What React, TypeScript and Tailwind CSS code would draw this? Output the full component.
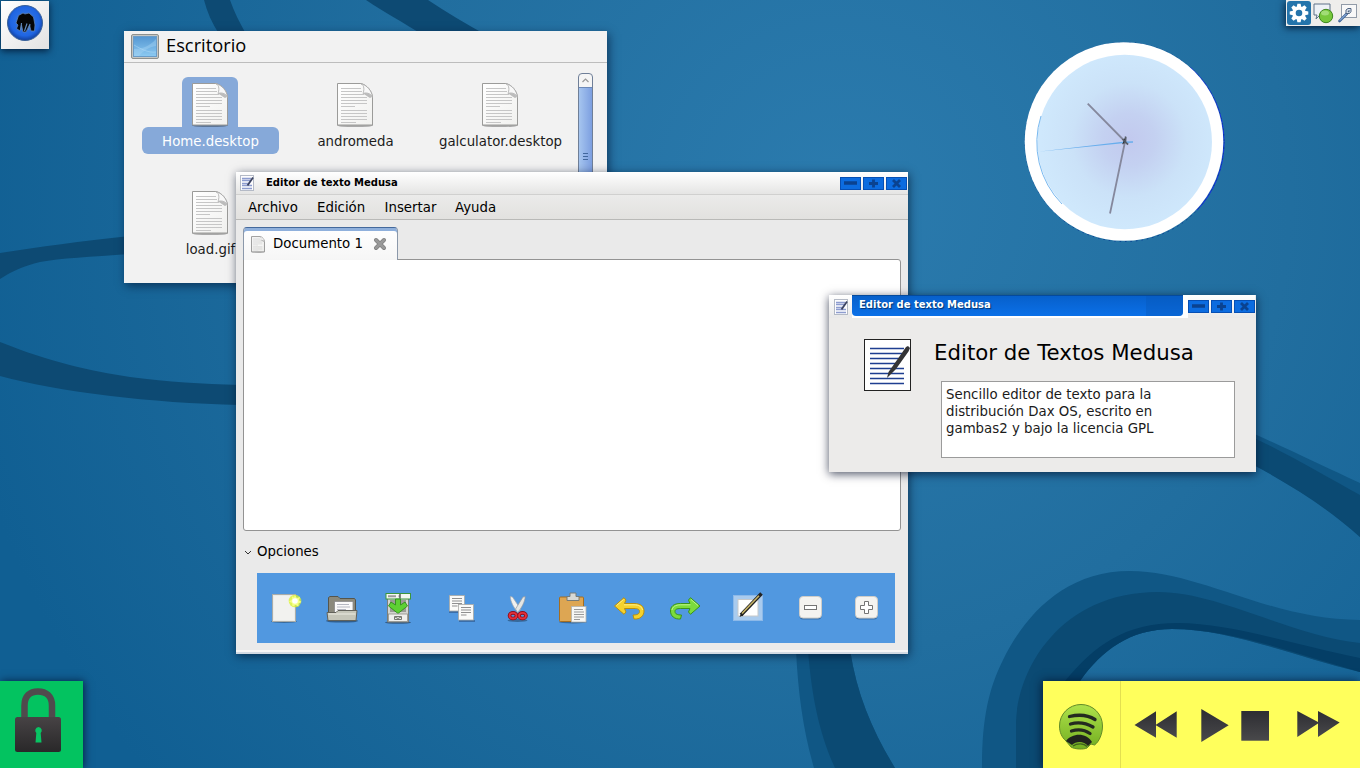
import React from "react";

const UI = "font-['DejaVu_Sans',sans-serif]";

function Wallpaper() {
  return (
    <svg className="absolute inset-0" width="1360" height="768" viewBox="0 0 1360 768">
      <defs>
        <radialGradient id="sky" gradientUnits="userSpaceOnUse" cx="840" cy="200" r="900">
          <stop offset="0" stopColor="#2b7bae" />
          <stop offset="0.5" stopColor="#216e9f" />
          <stop offset="1" stopColor="#105f93" />
        </radialGradient>
      </defs>
      <rect width="1360" height="768" fill="url(#sky)" />
      <path d="M204 0C207 12 212 23 219 34L246 34C240 23 234 12 230 0Z" fill="#0d4a73" />
      <path d="M366 0C384 12 402 22 425 36L488 36C466 24 446 12 428 0Z" fill="#0d4a73" />
      <path d="M0 253C40 247 80 241 130 236L130 254C90 257 60 258 40 262C24 266 12 271 0 279Z" fill="#0d4a73" />
      <path d="M0 342C50 362 90 371 130 377C170 382 200 384 240 385L240 405C150 403 60 392 0 376Z" fill="#0d4a73" />
      <path d="M1250 432C1290 450 1325 467 1360 483L1360 537C1330 510 1295 487 1250 463Z" fill="#105785" />
      <path d="M1250 436C1290 455 1325 476 1360 495L1360 537C1330 510 1295 487 1250 463Z" fill="#0b4a73" />
      <path d="M796 650C798 692 803 730 814 768L895 768C872 730 857 695 850 650Z" fill="#105785" />
      <path d="M808 650C812 700 820 735 835 768L895 768C872 730 857 695 850 650Z" fill="#0b4a73" />
      <path d="M982 768C982 720 988 690 1003 660C1025 615 1065 571 1130 571C1200 571 1270 620 1360 620L1360 672C1290 655 1230 629 1172 629C1130 629 1102 650 1080 681L1050 768Z" fill="#105785" />
      <path d="M1016 768L1016 725C1016 670 1060 592 1158 592C1220 592 1290 636 1360 643L1360 672C1290 655 1230 629 1172 629C1130 629 1102 650 1080 681L1050 768Z" fill="#0b4a73" />
      <path d="M1065 681C1095 645 1125 623 1178 623C1230 623 1300 646 1360 658L1360 672C1290 652 1230 629 1172 629C1130 629 1102 650 1080 681Z" fill="#043e66" />
    </svg>
  );
}

function PageIcon({ small = false }: { small?: boolean }) {
  return (
    <svg width={small ? 14 : 38} height={small ? 17 : 46} viewBox="0 0 38 46">
      <defs>
        <linearGradient id="paper" x1="0" y1="0" x2="1" y2="1">
          <stop offset="0" stopColor="#ffffff" />
          <stop offset="1" stopColor="#f1f1ef" />
        </linearGradient>
      </defs>
      <ellipse cx="19" cy="43.5" rx="18" ry="1.6" fill="#000" opacity="0.3" />
      <path d="M1.5 1.5H25C31 3 36 9 36.500 15V43H1.500Z" fill="url(#paper)" stroke={small ? "#777" : "#9b9b99"} strokeWidth={small ? 2 : 1} />
      <path d="M5 6.500H25M5 9.500H26M5 12.500H28M5 15.500H31M5 18.500H31M5 21.500H31M5 24.500H19M5 28.500H31M5 31.500H31M5 34.500H31M5 37.500H31M5 40.500H20" stroke="#c6c6c6" strokeWidth="1.100" />
      <path d="M24.500 1.500C29 3 28 9 27 11.500C31 10 35.500 12 36.500 15.500C36 9 31 3 24.500 1.500Z" fill="#f8f8f8" stroke="#aaa" strokeWidth=".8" />
      <path d="M27 11.500C31 10 35 12 36 15L34 16C31 14 29 13 27 11.500Z" fill="#bcbcbc" />
    </svg>
  );
}

function EditorIcon({ large = false }: { large?: boolean }) {
  if (large) {
    return (
      <svg width="47" height="52" viewBox="0 0 47 52">
        <rect x=".5" y=".5" width="46" height="51" fill="#fff" stroke="#222" />
        <path d="M6 9.500H40M6 14.500H38M6 19.500H37M6 24.500H34M6 29.500H40M6 34.500H40M6 39.500H40M6 44.500H40" stroke="#1f3f91" strokeWidth="1.700" />
        <path d="M42 8L44 7L46 9L44.500 12.500L32 30L25 37L23 39L24.500 33L33 21Z" fill="#333335" />
      </svg>
    );
  }
  return (
    <svg width="14" height="16" viewBox="0 0 14 16">
      <rect x=".5" y=".5" width="13" height="15" fill="#fcfcfe" stroke="#b4bac6" />
      <path d="M2 3.500H11M2 5.500H10M2 8.500H9M2 10.500H12M2 13.500H12" stroke="#8d9ccf" strokeWidth="1.500" />
      <path d="M13 2.500L7.500 10.500" stroke="#3a4261" strokeWidth="1.800" />
    </svg>
  );
}

function WindowButtons() {
  const marks = ["M4 6H17", "M10.500 2.500V10.500M6 6.500H15", "M7 3L14 10M14 3L7 10"];
  return (
    <div className="flex gap-[2px]">
      {marks.map((d, i) => (
        <svg key={i} width="21" height="13" viewBox="0 0 21 13">
          <rect x=".5" y=".5" width="20" height="12" fill="#0c6ce0" stroke="#064fb4" />
          <path d={d} stroke="#0a4290" strokeWidth={i === 0 ? 3.500 : 2.800} fill="none" />
        </svg>
      ))}
    </div>
  );
}

function FileItem({ name, selected = false }: { name: string; selected?: boolean }) {
  return (
    <div className="flex h-[108px] w-[145px] flex-col items-center">
      <div className={`mr-[2px] flex h-[50px] w-14 items-start justify-center rounded-t-md pt-[5px] ${selected ? "bg-[#86a9d9]" : ""}`}>
        <PageIcon />
      </div>
      <div className={`flex h-[27px] w-[137px] items-center justify-center rounded-md text-[13.33px] ${selected ? "bg-[#86a9d9] text-white" : "text-[#1c1c1c]"}`}>
        <span className="whitespace-nowrap pt-[3px]">{name}</span>
      </div>
    </div>
  );
}

function FilesWindow() {
  return (
    <section className={`absolute left-[124px] top-[31px] flex h-[252px] w-[483px] flex-col bg-[#f2f2f2] shadow-[2px_3px_9px_rgba(0,20,50,0.6)] ${UI}`}>
      <header className="flex h-8 items-center border-b border-[#bdbdbd] pl-[7px] font-['Open_Sans',sans-serif]">
        <svg width="28" height="25" viewBox="0 0 28 25">
          <defs>
            <linearGradient id="desk" x1="0" y1="0" x2="0" y2="1">
              <stop offset="0" stopColor="#5597d2" />
              <stop offset="1" stopColor="#8ccaf2" />
            </linearGradient>
          </defs>
          <rect x=".5" y=".5" width="27" height="24" rx="1.500" fill="#c5c7c4" stroke="#8d908e" />
          <rect x="2.500" y="2.500" width="23" height="20" fill="url(#desk)" stroke="#6a9cc8" />
          <path d="M3 15C11 15 19 12 25 5V12C18 13 12 17 8 22H3Z" fill="#a9d8f6" opacity=".4" />
          <path d="M3 11C10 15 17 19 25 18" fill="none" stroke="#b4dcf6" opacity=".5" />
        </svg>
        <h1 className="pb-[4px] pl-[7px] text-[18.3px] text-black">Escritorio</h1>
      </header>
      <div className="flex min-h-0 flex-1 justify-between pr-[14px]">
        <div className="grid h-[206px] grid-cols-[145px_145px_145px] content-start overflow-hidden pl-[14px] pt-[14px]">
          <FileItem name="Home.desktop" selected />
          <FileItem name="andromeda" />
          <FileItem name="galculator.desktop" />
          <FileItem name="load.gif" />
        </div>
        <div className="mt-[10px] flex h-[170px] w-[15px] flex-col rounded-t border border-[#6f7f98] bg-[#f5f5f5]">
          <div className="flex h-[14px] items-center justify-center border-b border-[#6c89b8]">
            <svg width="7" height="5" viewBox="0 0 7 5"><path d="M.5 4L3.500 1L6.500 4" fill="none" stroke="#999" strokeWidth="1.200" /></svg>
          </div>
          <div className="flex h-[137px] flex-col items-center justify-center gap-[2px] bg-linear-to-r from-[#a6c5ef] to-[#7d9fe0]">
            <div className="h-px w-[5px] bg-[#41679e]" />
            <div className="h-px w-[5px] bg-[#41679e]" />
            <div className="h-px w-[5px] bg-[#41679e]" />
          </div>
        </div>
      </div>
    </section>
  );
}

const sheet = (x: number, y: number, w: number, h: number) => (
  <g>
    <rect x={x} y={y} width={w} height={h} fill="#fafaf8" stroke="#a9a9a5" strokeWidth=".8" />
    {[3, 5.5, 8, 10.5].map((d) => (
      <path key={d} d={`M${x + 2.5} ${y + d}H${x + w - (d > 10 ? 7 : 2.5)}`} stroke="#8f8f8f" strokeWidth="1" />
    ))}
  </g>
);

const curlPath = "M1.500 14L11 5.700L13 8L11.500 11.500H21C28 11.500 31 14.500 31 19C31 24 27 27.500 21 27L20 23C24 23 26.500 22 26.500 19.500C26.500 17.500 25 16.500 21 16.500H11.500L13 20L11 22.300Z";

const toolIcons: React.ReactNode[] = [
  <>
    <ellipse cx="14" cy="29.500" rx="13" ry="1.500" fill="#123" opacity=".4" />
    <rect x="2.500" y="2.500" width="23" height="27" fill="#eaebe8" stroke="#a9aca9" />
    <path d="M4 4H24V28H4Z" fill="#f7f7f4" opacity=".6" />
    <circle cx="25" cy="9" r="6.300" fill="#d9f32b" opacity=".75" />
    <path d="M25 3L26.800 6L30 5L29 8.300L31.500 10L28.500 11.500L28.500 14.500L25.500 13L22.500 14.500L22 11L19 9.500L22 7.500L22 4.500L24 5.500Z" fill="#f5ff88" />
    <circle cx="25" cy="9" r="2.800" fill="#fff" />
  </>,
  <>
    <ellipse cx="16" cy="29" rx="16" ry="1.600" fill="#123" opacity=".5" />
    <path d="M2.500 23V5.500L4 4.500H12L14 6.500H28.500L29.500 8V23Z" fill="#8a897c" stroke="#55554b" />
    <rect x="8.500" y="9.500" width="18.500" height="12" fill="#fafafa" stroke="#8a8a8a" strokeWidth=".8" />
    <path d="M11 12.500H23M11 15H24M11 17.500H20" stroke="#b5b8c2" />
    <path d="M1 20.500H10L12 18.500H31L30 28.500H2Z" fill="#c5c6b9" stroke="#62625a" />
    <path d="M2.500 22H29.500" stroke="#ecece2" />
  </>,
  <>
    <ellipse cx="16" cy="30.500" rx="13" ry="1.300" fill="#123" opacity=".5" />
    <path d="M5.500 5H26.500V30H5.500Z" fill="#d3d4cf" stroke="#7c7e78" />
    <rect x="8" y="8" width="16" height="12" fill="#9a9c96" />
    <rect x="4" y="1.500" width="24.500" height="5.500" fill="#f3f8f1" stroke="#3c963c" />
    <path d="M6 4.300H14M16.500 4.300H17.500" stroke="#9a9a9a" strokeWidth="2" />
    <path d="M18 2V6.500" stroke="#111" />
    <path d="M13.500 7H18.500V13L23 10L25.500 14L16 21.500L6.500 14L9 10L13.500 13Z" fill="#5ed034" stroke="#278812" strokeWidth=".8" />
    <rect x="6.500" y="22" width="19" height="7.500" fill="#efefec" stroke="#8e8f8b" strokeWidth=".8" />
    <path d="M12.500 24.500H19.500V27.500H12.500ZM13 25L16 26.500L19 25" fill="none" stroke="#74766f" />
  </>,
  <>
    <path d="M4 20H17M14 29H30" stroke="#124" opacity=".35" strokeWidth="2" />
    {sheet(4.5, 3.5, 15, 15.5)}
    {sheet(13.5, 12.5, 15, 15.5)}
  </>,
  <>
    <ellipse cx="16.500" cy="28.500" rx="10" ry="1.500" fill="#123" opacity=".4" />
    <path d="M9.300 4.500L11.500 5L19.500 17L17 20.500C13 16 9.500 10 9.300 4.500Z" fill="#f1f1ef" stroke="#a0a7ad" strokeWidth=".7" />
    <path d="M24.200 4.500L22 5L14.500 17L16.500 20.500C20.500 16 24 10 24.200 4.500Z" fill="#e4e6e4" stroke="#8f979f" strokeWidth=".7" />
    <ellipse cx="12" cy="23.700" rx="3.500" ry="2.800" fill="none" stroke="#8e0b17" strokeWidth="3.600" />
    <ellipse cx="21.500" cy="23.700" rx="3.500" ry="2.800" fill="none" stroke="#8e0b17" strokeWidth="3.600" />
    <ellipse cx="12" cy="23.700" rx="3.500" ry="2.800" fill="none" stroke="#e3303b" strokeWidth="1.800" />
    <ellipse cx="21.500" cy="23.700" rx="3.500" ry="2.800" fill="none" stroke="#e3303b" strokeWidth="1.800" />
  </>,
  <>
    <ellipse cx="16" cy="30" rx="14" ry="1.400" fill="#123" opacity=".4" />
    <rect x="2.500" y="5" width="24" height="24.500" rx="1" fill="#dda653" stroke="#a56d20" />
    <path d="M10 8.500V4.500H13V1H19V4.500H22V8.500Z" fill="#d8d9d5" stroke="#777b77" />
    <rect x="14.500" y="14.500" width="14.500" height="15.500" fill="#f7f7f5" stroke="#b4b4b0" strokeWidth=".8" />
    <path d="M17 17.500H26M17 20H27M17 22.500H27M17 25H27M17 27.500H23" stroke="#999" />
  </>,
  <>
    <path d={curlPath} fill="#f6d22b" stroke="#b98f0d" strokeLinejoin="round" />
    <path d="M3.500 13.500L10.500 7.500M11 12.800H21C26 12.800 29 15 29.500 18" fill="none" stroke="#fdf08c" />
  </>,
  <g transform="translate(32.500 0) scale(-1 1)">
    <path d={curlPath} fill="#7bdc3c" stroke="#3b941a" strokeLinejoin="round" />
    <path d="M3.500 13.500L10.500 7.500M11 12.800H21C26 12.800 29 15 29.500 18" fill="none" stroke="#bff58c" />
  </g>,
  <>
    <rect x="1.500" y="3.500" width="29" height="25" fill="#a9cbee" stroke="#8db9e8" />
    <rect x="6" y="7.500" width="20" height="16.500" fill="#fff" stroke="#c7c9ca" />
    <path d="M9 23L29.500 1.500" stroke="#222" strokeWidth="3.600" />
    <path d="M10 21.500L27 3.700" stroke="#c9b567" strokeWidth="1.600" />
    <path d="M7.500 25L9 21.500L11 23.500Z" fill="#222" />
  </>,
  <>
    <rect x="5.500" y="5.500" width="22" height="22" rx="3.500" fill="#234c7b" opacity=".5" />
    <rect x="5.500" y="4.500" width="22" height="21.500" rx="3.500" fill="#f4f3f0" stroke="#cfcdc8" />
    <rect x="10.500" y="13.500" width="12" height="4" fill="#fff" stroke="#747474" />
  </>,
  <>
    <rect x="5.500" y="5.500" width="22" height="22" rx="3.500" fill="#234c7b" opacity=".5" />
    <rect x="5.500" y="4.500" width="22" height="21.500" rx="3.500" fill="#f4f3f0" stroke="#cfcdc8" />
    <path d="M14.500 9.500H18.500V13.500H22.500V17.500H18.500V21.500H14.500V17.500H10.500V13.500H14.500Z" fill="#fff" stroke="#747474" />
  </>,
];

function EditorWindow() {
  const menus = [
    { label: "Archivo", w: "w-[69px]" },
    { label: "Edición", w: "w-[67.5px]" },
    { label: "Insertar", w: "w-[70.5px]" },
    { label: "Ayuda", w: "w-[60px]" },
  ];
  return (
    <section className={`absolute left-[236px] top-[172px] flex h-[482px] w-[672px] flex-col border-b-2 border-[#d3dae3] bg-[#eaeaea] text-[13.33px] text-black shadow-[1px_2px_9px_rgba(0,15,40,0.65)] ${UI}`}>
      <header className="flex h-[23px] shrink-0 items-center border-b border-[#d0d0cf] bg-linear-to-b from-white to-[#e5e5e4] pl-[4px] pr-px">
        <EditorIcon />
        <h2 className="flex-1 pb-[2px] pl-3 text-[10px] font-bold">Editor de texto Medusa</h2>
        <div className="pt-px">
          <WindowButtons />
        </div>
      </header>
      <nav className="flex h-[25px] shrink-0 items-center border-b border-[#b9b9b7] bg-linear-to-b from-[#ebebea] to-[#e2e1df] pl-3">
        {menus.map((m) => (
          <span key={m.label} className={`${m.w} pt-px`}>{m.label}</span>
        ))}
      </nav>
      <div className="flex flex-col px-[7px] pt-[7px]">
        <div className="z-10 -mb-px flex h-[33px] w-[155px] items-center rounded-t border border-b-0 border-[#8b98aa] border-t-[#44699c] bg-linear-to-b from-white to-[#f6f6f6] pl-[7px] shadow-[inset_0_3px_0_#8fb0dc]">
          <PageIcon small />
          <span className="pl-[8px] pr-[10px]">Documento 1</span>
          <svg width="14" height="14" viewBox="0 0 14 14"><path d="M3 3L11 11M11 3L3 11" stroke="#7d7d7d" strokeWidth="4" strokeLinecap="round" /><path d="M3 3L11 11M11 3L3 11" stroke="#999" strokeWidth="2.500" strokeLinecap="round" /></svg>
        </div>
        <div className="h-[272px] rounded-[3px] rounded-tl-none border border-[#939393] bg-white" />
      </div>
      <div className="flex h-[42px] shrink-0 items-center pl-[8px]">
        <svg width="8" height="5" viewBox="0 0 8 5"><path d="M1 1L4 4L7 1" fill="none" stroke="#333" /></svg>
        <span className="pl-[5px]">Opciones</span>
      </div>
      <div className="ml-[21px] flex h-[70px] w-[638px] shrink-0 items-center bg-[#5198e0] pl-px">
        {toolIcons.map((icon, i) => (
          <button key={i} className={`flex w-[56.2px] justify-center ${i === 3 || i === 8 || i === 9 ? "ml-[6px]" : ""}`}>
            <svg width="32" height="32" viewBox="0 0 32 32">{icon}</svg>
          </button>
        ))}
      </div>
      <div className="mt-[7px] h-[2px] bg-[#f8f6f6]" />
    </section>
  );
}

function AboutDialog() {
  return (
    <section className={`absolute left-[829px] top-[295px] flex h-[177px] w-[427px] flex-col bg-[#ecebea] text-black shadow-[0_2px_9px_rgba(0,10,35,0.7)] ${UI}`}>
      <header className="flex h-6 shrink-0 items-start pr-px">
        <div className="flex h-[23px] w-[23px] items-center justify-center bg-linear-to-b from-white to-[#e8e8e8] pt-px">
          <EditorIcon />
        </div>
        <div className="h-[23px] flex-1 bg-white">
          <div className="flex h-[21px] w-[331px] justify-between overflow-hidden rounded-b-[4px] border-t border-[#044a9d] bg-linear-to-b from-[#0760cb] to-[#0b70e8] pl-[7px]">
            <h2 className="pt-[1px] text-[10px] font-bold text-white [text-shadow:1px_1px_1px_#03336f]">Editor de texto Medusa</h2>
            <div className="w-[37px] bg-[#0757b8]/40" />
          </div>
        </div>
        <div className="h-[23px] bg-linear-to-b from-white to-[#e8e8e8] pt-[5px]">
          <WindowButtons />
        </div>
      </header>
      <div className="flex pl-[35px] pt-5">
        <EditorIcon large />
        <div className="flex flex-col pl-[23px]">
          <h3 className="h-[42px] whitespace-nowrap text-[21.3px] leading-[28px]">Editor de Textos Medusa</h3>
          <p className="ml-[7px] h-[77px] w-[294px] whitespace-pre-line border border-[#9b9b9b] bg-white pl-[4px] pt-[4px] text-[13.33px] leading-[17px] text-[#1b1b1b]">
            {"Sencillo editor de texto para la\ndistribución Dax OS, escrito en\ngambas2 y bajo la licencia GPL"}
          </p>
        </div>
      </div>
    </section>
  );
}

function Clock() {
  return (
    <svg className="absolute left-[1020px] top-[36px]" width="210" height="210" viewBox="1020 36 210 210">
      <defs>
        <radialGradient id="dial" gradientUnits="userSpaceOnUse" cx="1129" cy="140" r="88">
          <stop offset="0" stopColor="#c2c9ee" />
          <stop offset=".3" stopColor="#c4d1f1" />
          <stop offset=".65" stopColor="#cbe2f8" />
          <stop offset="1" stopColor="#cfe8fc" />
        </radialGradient>
      </defs>
      <circle cx="1124.800" cy="142" r="99.200" fill="none" stroke="#1638d8" strokeWidth="1.200" strokeDasharray="160 463" strokeDashoffset="85" />
      <circle cx="1124.500" cy="142" r="99.500" fill="none" stroke="#083b92" strokeDasharray="1.500 4" />
      <circle cx="1124" cy="141.500" r="99.300" fill="#fff" />
      <circle cx="1124.700" cy="142" r="87.300" fill="url(#dial)" />
      <path d="M1062 204A87.300 87.300 0 0 1 1041 116" fill="none" stroke="#79b9f0" />
      <path d="M1087.700 103.700L1128 144.500M1110 213.500L1126 137" stroke="#85889d" strokeWidth="1.800" />
      <path d="M1038 151.800L1125 141.400L1133 141.200V142.700L1125 143Z" fill="#68aeed" />
      <path d="M1122.500 139L1128 144.500M1125.500 136.500V142L1122.500 144" stroke="#555b66" strokeWidth="1.500" />
    </svg>
  );
}

function AppLauncher() {
  return (
    <div className="absolute left-px top-px flex h-12 w-12 justify-center bg-linear-to-br from-white to-[#e2e2e2] pt-1 shadow-[0_2px_7px_rgba(0,15,40,0.8)]">
      <svg width="36" height="36" viewBox="0 0 36 36">
        <defs>
          <radialGradient id="orb" cx=".5" cy=".45" r=".55">
            <stop offset="0" stopColor="#397de9" />
            <stop offset=".75" stopColor="#1f65e2" />
            <stop offset="1" stopColor="#123f9c" />
          </radialGradient>
        </defs>
        <circle cx="18" cy="18" r="17.500" fill="url(#orb)" stroke="#39629a" />
        <path d="M9 18L11.500 10.500L16 8L18 9L22 8L26.500 12L28 20L27.500 26H24L22.500 20L19 27H16L14.500 20L13 26L9.500 23.500L11 20Z" fill="#050607" stroke="#5f83b5" strokeWidth=".8" />
        <path d="M14.500 18L13.800 25M17.500 26L20 18.500M21.500 25L23 19" stroke="#6088b9" strokeWidth="1.200" />
      </svg>
    </div>
  );
}

function Tray() {
  const teeth = [0, 45, 90, 135, 180, 225, 270, 315];
  return (
    <div className="absolute right-0 top-0 flex h-[26px] w-[74px] gap-[2px] bg-[#efeeec] pl-px pt-px shadow-[-1px_2px_7px_rgba(0,15,40,0.8)]">
      <div className="flex size-6 items-center justify-center rounded-[3px] bg-[#2474ab]">
        <svg width="20" height="20" viewBox="-10 -10 20 20">
          {teeth.map((a) => (
            <path key={a} d="M-2.500 -5L-1.600 -9.300H1.600L2.500 -5Z" fill="#fff" transform={`rotate(${a})`} />
          ))}
          <circle r="5" fill="none" stroke="#fff" strokeWidth="3.400" />
        </svg>
      </div>
      <svg width="22" height="24" viewBox="0 0 22 24">
        <path d="M1 3H17V14H7L3 18L4 14H1Z" fill="#edf1f6" stroke="#5f7289" />
        <circle cx="13" cy="15" r="6.700" fill="#77c83c" stroke="#3c861e" />
        <ellipse cx="12" cy="12" rx="4" ry="2.500" fill="#b3e68e" opacity=".7" />
      </svg>
      <svg width="22" height="24" viewBox="0 0 22 24">
        <rect x="4.500" y="3.500" width="15" height="13" fill="#f8f8f8" stroke="#929ba8" />
        <path d="M2.500 20L10 12.500" stroke="#3e6296" strokeWidth="2.600" strokeLinecap="round" />
        <path d="M2.500 19.500L10 12.500" stroke="#7fa2d0" strokeWidth="1.200" />
        <path d="M9 12.500V9L11 7.500H14V10.500L12.500 12.500Z" fill="#dce4ee" stroke="#4f6380" />
        <path d="M11 11L12.500 9.500" stroke="#4f6380" strokeWidth="1.500" />
      </svg>
    </div>
  );
}

function LockTile() {
  return (
    <div className="absolute bottom-0 left-0 flex h-[87px] w-[83px] bg-[#03c360] pl-[15px] pt-[7px] shadow-[1px_0_8px_rgba(0,15,40,0.75)]">
      <svg width="46" height="65" viewBox="0 0 46 65">
        <defs>
          <linearGradient id="steel" x1="0" y1="0" x2="0" y2="1">
            <stop offset="0" stopColor="#474345" />
            <stop offset="1" stopColor="#292829" />
          </linearGradient>
        </defs>
        <path d="M9.500 31V17.500C9.500 8 15 3.500 23 3.500S37 8 37 17.500V31" fill="none" stroke="#504a4d" strokeWidth="6.500" />
        <rect y="29" width="46" height="35" rx="2.500" fill="url(#steel)" />
        <path d="M23.500 39A3.500 3.500 0 0 1 25.700 45L26.500 54.500H20.500L21.300 45A3.500 3.500 0 0 1 23.500 39Z" fill="#08c463" />
      </svg>
    </div>
  );
}

function MediaPanel() {
  return (
    <div className="absolute bottom-0 right-0 flex h-[87px] w-[317px] bg-[#ffff5c] shadow-[-1px_0_9px_rgba(0,15,40,0.75)]">
      <div className="flex w-[78px] justify-center border-r border-[#e3df50] pr-[2px] pt-[22px]">
        <svg width="46" height="48" viewBox="0 0 46 48">
          <defs>
            <linearGradient id="lime" x1="0" y1="0" x2="0" y2="1">
              <stop offset="0" stopColor="#aee24b" />
              <stop offset="1" stopColor="#73ae20" />
            </linearGradient>
          </defs>
          <path d="M23 1.500C35 1.500 44.500 11 44.500 23C44.500 31 41 39 36.500 42L33 41L29 45C26 46.500 17 46.500 13 44L8 38C3.500 34 1.500 29 1.500 23C1.500 11 11 1.500 23 1.500Z" fill="url(#lime)" stroke="#638b28" />
          <path d="M11.500 13.500C20 11.500 30 12 37 16.500M12.500 21C20 19 28 20 35 24M13.500 28C20 26 27 27 32 30.500" fill="none" stroke="#242a20" strokeWidth="3.300" strokeLinecap="round" />
          <path d="M8 38C14 30 28 29 34 39L30 43C26 38 18 38 14 42Z" fill="#20231e" />
          <path d="M15 43C19 40 26 40 29 43.500" fill="none" stroke="#3e5f1d" strokeWidth="1.200" />
        </svg>
      </div>
      <svg width="239" height="87" viewBox="1121 681 239 87">
        <defs>
          <linearGradient id="coal" x1="0" y1="0" x2="0" y2="1">
            <stop offset="0" stopColor="#2d2d32" />
            <stop offset="1" stopColor="#49494b" />
          </linearGradient>
        </defs>
        <path d="M1134.500 725L1156 711.300V737.700ZM1155.500 725L1176.700 711.300V737.700Z" fill="url(#coal)" />
        <path d="M1201.300 709L1228.700 725.300L1201.300 742Z" fill="url(#coal)" />
        <rect x="1241.300" y="711" width="27.700" height="29.700" fill="url(#coal)" />
        <path d="M1297.300 711L1318 722V711L1339.700 722.500L1318 737V723.500L1297.300 737Z" fill="url(#coal)" />
      </svg>
    </div>
  );
}

export default function App() {
  return (
    <main className="relative h-[768px] w-[1360px] overflow-hidden bg-[#1c6a9c]">
      <Wallpaper />
      <AppLauncher />
      <Tray />
      <Clock />
      <FilesWindow />
      <EditorWindow />
      <AboutDialog />
      <LockTile />
      <MediaPanel />
    </main>
  );
}
